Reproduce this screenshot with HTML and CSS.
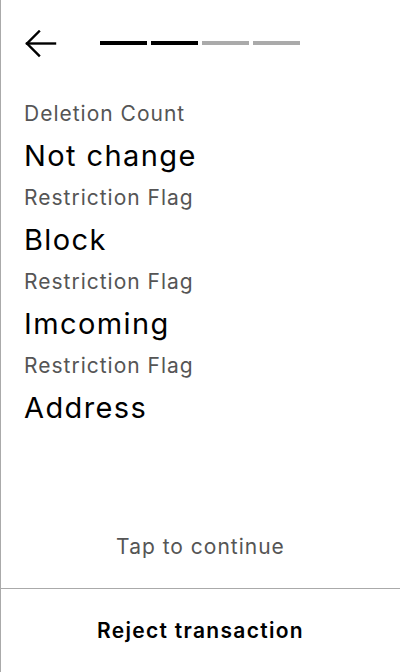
FILE: index.html
```html
<!DOCTYPE html>
<html>
<head>
<meta charset="utf-8">
<link rel="stylesheet" href="styles.css">
</head>
<body>
<div class="screen">
  <header class="header">
    <button class="back" aria-label="Back">
      <svg width="34" height="28" viewBox="0 0 34 28" fill="none" stroke="#000" stroke-width="2.4" stroke-linecap="square">
        <path d="M3 13.5 H31"/>
        <path d="M15 1.5 L3 13.5 L15 25.5"/>
      </svg>
    </button>
    <div class="progress">
      <span class="step done"></span>
      <span class="step done"></span>
      <span class="step"></span>
      <span class="step"></span>
    </div>
  </header>
  <main class="fields">
    <div class="label">Deletion Count</div>
    <div class="value">Not change</div>
    <div class="label">Restriction Flag</div>
    <div class="value">Block</div>
    <div class="label">Restriction Flag</div>
    <div class="value">Imcoming</div>
    <div class="label">Restriction Flag</div>
    <div class="value">Address</div>
  </main>
  <div class="tap">Tap to continue</div>
  <button class="reject">Reject transaction</button>
</div>
</body>
</html>
```
FILE: styles.css
```css
* { box-sizing: border-box; }
html, body { margin: 0; padding: 0; background: #fff; }
body { font-family: Inter, "Noto Sans", sans-serif; }
.screen {
  width: 400px;
  height: 672px;
  border-left: 1px solid #aaa;
  display: flex;
  flex-direction: column;
}
.header {
  display: flex;
  align-items: center;
  height: 98px;
  padding: 0 0 10px 23px;
}
.back {
  border: 0;
  background: none;
  padding: 0;
  width: 34px;
  height: 28px;
  display: block;
}
.back svg { display: block; }
.progress {
  display: flex;
  gap: 4px;
  margin-left: 42px;
  margin-top: -2px;
}
.step {
  width: 47px;
  height: 4px;
  background: #aaa;
}
.step.done { background: #000; }
.fields {
  padding: 0 0 0 23px;
  flex: 1;
}
.label {
  font-size: 21px;
  line-height: 32px;
  letter-spacing: 1px;
  color: #555;
}
.value {
  font-size: 29px;
  line-height: 52px;
  letter-spacing: 1.4px;
  color: #000;
}
.tap {
  height: 84px;
  display: flex;
  align-items: center;
  justify-content: center;
  font-size: 21px;
  letter-spacing: 1px;
  color: #555;
}
.reject {
  height: 84px;
  border: 0;
  border-top: 1px solid #aaa;
  background: #fff;
  font-family: Inter, sans-serif;
  font-size: 21px;
  font-weight: 600;
  letter-spacing: 1.3px;
  color: #000;
  padding: 0;
}
```
